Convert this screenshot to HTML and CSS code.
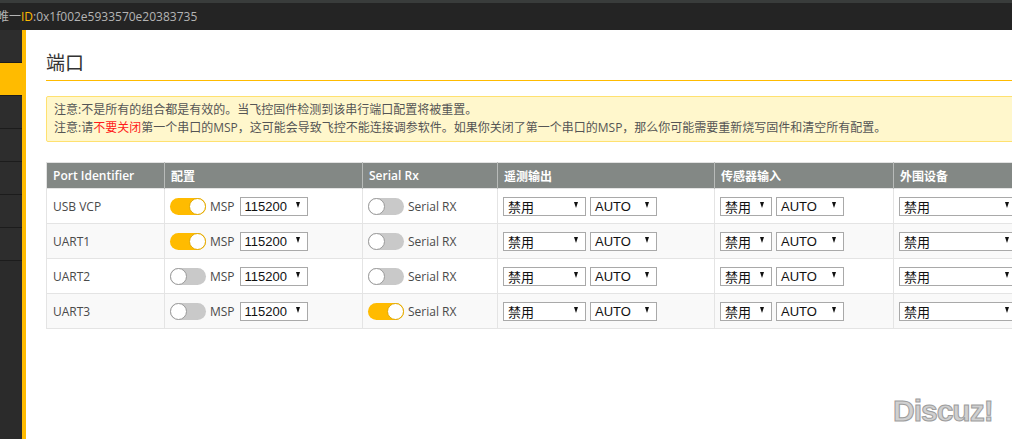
FILE: index.html
```html
<!DOCTYPE html>
<html lang="zh">
<head>
<meta charset="utf-8">
<title>端口</title>
<link rel="stylesheet" href="styles.css">
</head>
<body>
<header class="topbar">
  <span class="uid">唯一<span class="hl">ID</span>:0x1f002e5933570e20383735</span>
</header>
<div class="main">
  <nav class="sidebar">
    <div class="nav-item"></div>
    <div class="nav-item active"></div>
    <div class="nav-item"></div>
    <div class="nav-item"></div>
    <div class="nav-item"></div>
    <div class="nav-item"></div>
    <div class="nav-item"></div>
  </nav>
  <section class="content">
    <div class="inner">
      <h1 class="title">端口</h1>
      <div class="note">
        <p>注意:不是所有的组合都是有效的。当飞控固件检测到该串行端口配置将被重置。</p>
        <p>注意:请<span class="warn">不要关闭</span>第一个串口的MSP，这可能会导致飞控不能连接调参软件。如果你关闭了第一个串口的MSP，那么你可能需要重新烧写固件和清空所有配置。</p>
      </div>
      <table class="ports">
        <colgroup>
          <col class="c1"><col class="c2"><col class="c3"><col class="c4"><col class="c5"><col class="c6">
        </colgroup>
        <thead>
          <tr><th>Port Identifier</th><th>配置</th><th>Serial Rx</th><th>遥测输出</th><th>传感器输入</th><th>外围设备</th></tr>
        </thead>
        <tbody>
          <tr>
            <td>USB VCP</td>
            <td><div class="cell"><span class="switch on"><span class="knob"></span></span><span class="lbl">MSP</span><span class="sel w68"><span>115200</span><i class="arr"></i></span></div></td>
            <td><div class="cell"><span class="switch"><span class="knob"></span></span><span class="lbl">Serial RX</span></div></td>
            <td><div class="cell"><span class="sel w83"><span>禁用</span><i class="arr"></i></span><span class="sel w67"><span>AUTO</span><i class="arr"></i></span></div></td>
            <td><div class="cell"><span class="sel w52"><span>禁用</span><i class="arr"></i></span><span class="sel w68"><span>AUTO</span><i class="arr"></i></span></div></td>
            <td><div class="cell"><span class="sel w118"><span>禁用</span><i class="arr"></i></span></div></td>
          </tr>
          <tr class="alt">
            <td>UART1</td>
            <td><div class="cell"><span class="switch on"><span class="knob"></span></span><span class="lbl">MSP</span><span class="sel w68"><span>115200</span><i class="arr"></i></span></div></td>
            <td><div class="cell"><span class="switch"><span class="knob"></span></span><span class="lbl">Serial RX</span></div></td>
            <td><div class="cell"><span class="sel w83"><span>禁用</span><i class="arr"></i></span><span class="sel w67"><span>AUTO</span><i class="arr"></i></span></div></td>
            <td><div class="cell"><span class="sel w52"><span>禁用</span><i class="arr"></i></span><span class="sel w68"><span>AUTO</span><i class="arr"></i></span></div></td>
            <td><div class="cell"><span class="sel w118"><span>禁用</span><i class="arr"></i></span></div></td>
          </tr>
          <tr>
            <td>UART2</td>
            <td><div class="cell"><span class="switch"><span class="knob"></span></span><span class="lbl">MSP</span><span class="sel w68"><span>115200</span><i class="arr"></i></span></div></td>
            <td><div class="cell"><span class="switch"><span class="knob"></span></span><span class="lbl">Serial RX</span></div></td>
            <td><div class="cell"><span class="sel w83"><span>禁用</span><i class="arr"></i></span><span class="sel w67"><span>AUTO</span><i class="arr"></i></span></div></td>
            <td><div class="cell"><span class="sel w52"><span>禁用</span><i class="arr"></i></span><span class="sel w68"><span>AUTO</span><i class="arr"></i></span></div></td>
            <td><div class="cell"><span class="sel w118"><span>禁用</span><i class="arr"></i></span></div></td>
          </tr>
          <tr class="alt">
            <td>UART3</td>
            <td><div class="cell"><span class="switch"><span class="knob"></span></span><span class="lbl">MSP</span><span class="sel w68"><span>115200</span><i class="arr"></i></span></div></td>
            <td><div class="cell"><span class="switch on"><span class="knob"></span></span><span class="lbl">Serial RX</span></div></td>
            <td><div class="cell"><span class="sel w83"><span>禁用</span><i class="arr"></i></span><span class="sel w67"><span>AUTO</span><i class="arr"></i></span></div></td>
            <td><div class="cell"><span class="sel w52"><span>禁用</span><i class="arr"></i></span><span class="sel w68"><span>AUTO</span><i class="arr"></i></span></div></td>
            <td><div class="cell"><span class="sel w118"><span>禁用</span><i class="arr"></i></span></div></td>
          </tr>
        </tbody>
      </table>
    </div>
  </section>
</div>
<div class="watermark">Discuz!</div>
</body>
</html>
```
FILE: styles.css
```css
* { box-sizing: border-box; }
html, body {
  margin: 0;
  padding: 0;
  width: 1012px;
  height: 439px;
  overflow: hidden;
  background: #fff;
  font-family: "Open Sans", "Noto Sans CJK SC", sans-serif;
  font-size: 12px;
  color: #4a4a4a;
}
.topbar {
  height: 30px;
  background: #242424;
  border-top: 3px solid #393c3b;
  display: flex;
  align-items: center;
  padding-bottom: 1px;
}
.uid {
  margin-left: -3px;
  color: #b4b4b4;
  font-size: 12px;
  white-space: nowrap;
}
.uid .hl { color: #ffbb00; }
.main {
  display: flex;
  height: 409px;
}
.sidebar {
  width: 26px;
  flex: none;
  background: #2b2b2b;
  border-right: 4px solid #ffbb00;
  display: flex;
  flex-direction: column;
}
.nav-item {
  height: 33px;
  border-bottom: 1px solid #1c1c1c;
  background: #2d2d2d;
}
.nav-item.active { background: #ffbb00; }
.content {
  flex: 1;
  overflow: hidden;
  padding: 18px 0 0 20px;
}
.inner { width: 1060px; }
.title {
  margin: 0;
  font-family: "Noto Sans CJK SC", sans-serif;
  font-weight: 400;
  font-size: 19px;
  line-height: 28px;
  color: #333;
  padding-bottom: 4px;
  border-bottom: 1px solid #ffbb00;
}
.note {
  margin-top: 15px;
  background: #fff7cc;
  border: 1px solid #ffe170;
  border-radius: 2px;
  padding: 4px 7px;
  color: #555;
  font-size: 12px;
}
.note p {
  margin: 0;
  line-height: 18px;
  white-space: nowrap;
}
.note .warn { color: #ff1a1a; }
.ports {
  margin-top: 20px;
  border-collapse: collapse;
  table-layout: fixed;
  width: 1050px;
  border: 1px solid #e2e2e2;
}
.c1 { width: 118px; }
.c2 { width: 198px; }
.c3 { width: 135px; }
.c4 { width: 217px; }
.c5 { width: 179px; }
.c6 { width: 203px; }
.ports th {
  height: 26px;
  background: #838885;
  color: #fff;
  font-weight: 600;
  text-align: left;
  padding: 0 6px;
  border-left: 1px solid #b8bbb9;
  white-space: nowrap;
}
.ports th:first-child { border-left: none; }
.ports td {
  height: 35px;
  padding: 0 5px 0 5px;
  border: 1px solid #e4e4e4;
  white-space: nowrap;
  background: #fff;
}
.ports td:first-child { padding-left: 6px; }
.ports tr.alt td { background: #f9f9f9; }
.cell {
  display: flex;
  align-items: center;
}
.switch {
  width: 36px;
  height: 17px;
  border-radius: 9px;
  background: #c9c9c9;
  display: inline-flex;
  justify-content: flex-start;
  flex: none;
}
.switch.on {
  background: #ffbb00;
  justify-content: flex-end;
}
.knob {
  width: 17px;
  height: 17px;
  border-radius: 50%;
  background: #fff;
  border: 1px solid #9a9a9a;
}
.switch.on .knob { border-color: #e0a800; }
.lbl {
  margin-left: 4px;
  color: #4a4a4a;
}
.sel {
  display: inline-flex;
  align-items: center;
  justify-content: space-between;
  height: 19px;
  border: 1px solid #a9a9a9;
  background: #fff;
  padding: 0 7px 0 4px;
  font-family: "Liberation Sans", "Noto Sans CJK SC", sans-serif;
  font-size: 13px;
  color: #111;
  flex: none;
}
.lbl + .sel { margin-left: 5px; }
.sel + .sel { margin-left: 4px; }
.arr {
  width: 0;
  height: 0;
  border-left: 2.5px solid transparent;
  border-right: 2.5px solid transparent;
  border-top: 6px solid #111;
  margin-top: -2px;
}
.w68 { width: 68px; }
.w83 { width: 83px; }
.w67 { width: 67px; }
.w52 { width: 52px; }
.w118 { width: 118px; }
.watermark {
  position: absolute;
  left: 893px;
  top: 394px;
  font-family: "Liberation Sans", sans-serif;
  font-weight: 700;
  font-size: 30px;
  letter-spacing: -1px;
  color: #d0d0d0;
  -webkit-text-stroke: 1px #9c9c9c;
}
```
